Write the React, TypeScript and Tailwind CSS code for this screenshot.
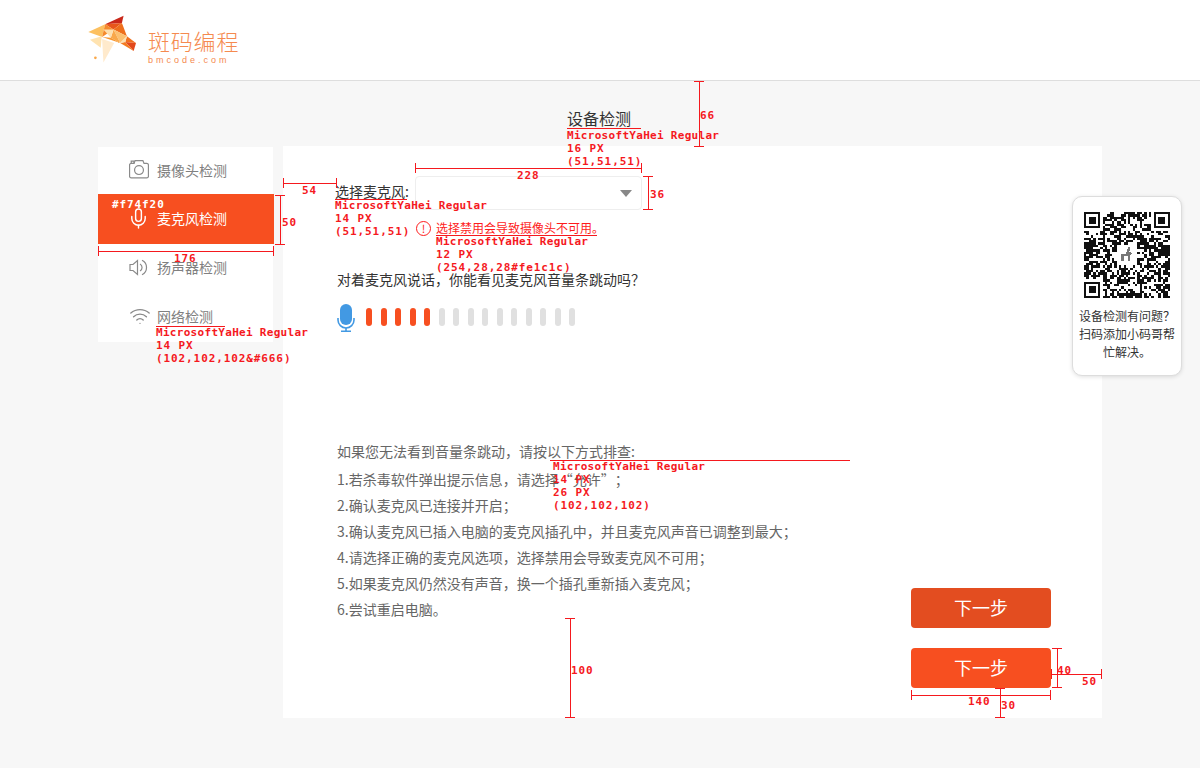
import { Mic, Wifi } from "lucide-react";

const font = { cn: "font-['Noto_Sans_CJK_SC','Noto_Sans',sans-serif] [text-spacing-trim:space-all]" };

const volume = [1, 1, 1, 1, 1, 0, 0, 0, 0, 0, 0, 0, 0, 0, 0];

const tips = [
  "1.若杀毒软件弹出提示信息，请选择“允许”；",
  "2.确认麦克风已连接并开启；",
  "3.确认麦克风已插入电脑的麦克风插孔中，并且麦克风声音已调整到最大；",
  "4.请选择正确的麦克风选项，选择禁用会导致麦克风不可用；",
  "5.如果麦克风仍然没有声音，换一个插孔重新插入麦克风；",
  "6.尝试重启电脑。",
];

function Logo() {
  return (
    <svg viewBox="54 45 143 145" className="h-[49px] w-[48px] shrink-0">
      <polygon points="105,72 160,47 155,68" fill="#c9281a" />
      <polygon points="105,72 155,68 130,88" fill="#e8561a" />
      <polygon points="155,68 170,108 130,88" fill="#ee6f1c" />
      <polygon points="170,108 197,128 165,125" fill="#f0701e" />
      <polygon points="130,88 170,108 150,128" fill="#fcc070" />
      <polygon points="130,88 150,128 122,112" fill="#f9a84a" />
      <polygon points="165,125 197,128 190,152" fill="#e2481b" />
      <polygon points="150,128 165,125 190,152" fill="#f47b20" />
      <polygon points="170,108 165,125 150,128" fill="#fde0b0" />
      <polygon points="55,95 105,72 96,110" fill="#fcc060" />
      <polygon points="105,72 130,88 96,110" fill="#f58a2c" />
      <polygon points="100,88 130,88 122,112" fill="#fde0b0" />
      <polygon points="96,110 122,112 150,128" fill="#f7962e" />
      <polygon points="60,118 95,108 92,142" fill="#ffe3b0" />
      <polygon points="96,116 132,128 100,186" fill="#ffeacc" />
      <circle cx="76" cy="172" r="4" fill="#f9a84a" />
    </svg>
  );
}

function CameraIcon() {
  return (
    <svg viewBox="1 1 18 17" className="h-[19px] w-[20px]" fill="none" stroke="#8a8a8a" strokeWidth="1.1">
      <path d="M1.5 5.5a1.5 1.500 0 0 1 1.500-1.500h2.500l1-2.500h7l1 2.500H17a1.500 1.500 0 0 1 1.500 1.500v10a1.500 1.500 0 0 1-1.500 1.500H3a1.500 1.500 0 0 1-1.500-1.500z" />
      <circle cx="10" cy="10" r="4" />
      <path d="M3 4V2h2.500V4" />
    </svg>
  );
}

function SpeakerIcon() {
  return (
    <svg viewBox="0 0 20 18" className="h-[19px] w-[20px]" fill="none" stroke="#8a8a8a" strokeWidth="1.2">
      <path d="M1 6h3l4.500-4v14L4 12H1z" />
      <path d="M11 5.500a4 4 0 0 1 0 7" />
      <path d="M13 1.800a8 8 0 0 1 0 14.400" />
    </svg>
  );
}

function MicSolid() {
  return (
    <svg viewBox="0 0 18 28" className="h-[28px] w-[18px] shrink-0" fill="none">
      <rect x="3" y="0" width="12" height="21" rx="6" fill="#4299e3" />
      <path d="M1 14v2a8 8 0 0 0 16 0v-2" stroke="#4299e3" strokeWidth="1.6" />
      <path d="M9 24v3M4 27.200h10" stroke="#4299e3" strokeWidth="1.6" />
    </svg>
  );
}

// pseudo random modules, good enough to read as a QR code at this size
function QrCode() {
  const n = 37;
  let seed = 20170;
  const cells: string[] = [];
  const inFinder = (x: number, y: number) =>
    (x < 8 && y < 8) || (x >= n - 8 && y < 8) || (x < 8 && y >= n - 8);
  for (let y = 0; y < n; y++) {
    for (let x = 0; x < n; x++) {
      seed = (seed * 1103515245 + 12345) & 0x7fffffff;
      if (!inFinder(x, y) && (seed >> 16) % 100 < 52) cells.push(`M${x} ${y}h1v1h-1z`);
    }
  }
  const finder = (x: number, y: number) => (
    <g key={`${x}-${y}`}>
      <rect x={x + 0.5} y={y + 0.5} width="6" height="6" fill="none" stroke="#111" />
      <rect x={x + 2} y={y + 2} width="3" height="3" fill="#111" />
    </g>
  );
  return (
    <svg viewBox="0 0 37 37" className="h-[86px] w-[86px]" shapeRendering="crispEdges">
      <path d={cells.join("")} fill="#111" />
      {finder(0, 0)}
      {finder(30, 0)}
      {finder(0, 30)}
      <rect x="14" y="14" width="9" height="9" fill="#fff" />
      <path d="M16 21v-3h2l1-3h1l-.5 2 1.500 1-1 .5V21h-1v-2h-2v2z" fill="#777" />
    </svg>
  );
}

function NavItem({ icon, label, className }: { icon: React.ReactNode; label: string; className: string }) {
  return (
    <div className={`flex items-center pb-[2px] pl-[31px] text-sm text-[#808080] ${className}`}>
      <span className="flex w-[28px] items-center">{icon}</span>
      {label}
    </div>
  );
}

function Note({ lines, className }: { lines: string[]; className: string }) {
  return (
    <div className={`absolute whitespace-pre font-['DejaVu_Sans_Mono',monospace] text-[11px] leading-[13px] font-bold text-[#f5191e] ${className}`}>
      {lines.map((l) => (
        <div key={l} className={l.startsWith("Micro") ? "tracking-[0.3px]" : "tracking-[0.9px]"}>
          {l}
        </div>
      ))}
    </div>
  );
}

const rules = [
  // 66
  "left-[699px] top-[81px] h-[65px] w-px",
  "left-[694px] top-[81px] h-px w-[10px]",
  "left-[694px] top-[146px] h-px w-[10px]",
  // title / label underlines
  "left-[567px] top-[128px] h-px w-[74px]",
  "left-[335px] top-[199px] h-px w-[72px]",
  "left-[436px] top-[235px] h-px w-[161px]",
  "left-[156px] top-[326px] h-px w-[69px]",
  "left-[550px] top-[460px] h-px w-[300px]",
  // 228
  "left-[415px] top-[168px] h-px w-[226px]",
  "left-[415px] top-[163px] h-[10px] w-px",
  "left-[641px] top-[163px] h-[10px] w-px",
  // 36
  "left-[648px] top-[176px] h-[33px] w-px",
  "left-[643px] top-[176px] h-px w-[10px]",
  "left-[643px] top-[209px] h-px w-[10px]",
  // 54
  "left-[283px] top-[183px] h-px w-[54px]",
  "left-[283px] top-[178px] h-[10px] w-px",
  "left-[336px] top-[178px] h-[10px] w-px",
  // 176
  "left-[98px] top-[251px] h-px w-[175px]",
  "left-[98px] top-[246px] h-[10px] w-px",
  "left-[273px] top-[246px] h-[10px] w-px",
  // 50 nav
  "left-[280px] top-[195px] h-[49px] w-px",
  "left-[275px] top-[195px] h-px w-[10px]",
  "left-[275px] top-[244px] h-px w-[10px]",
  // 100
  "left-[570px] top-[618px] h-[100px] w-px",
  "left-[565px] top-[618px] h-px w-[10px]",
  "left-[565px] top-[717px] h-px w-[10px]",
  // 40
  "left-[1057px] top-[648px] h-[40px] w-px",
  "left-[1052px] top-[648px] h-px w-[10px]",
  "left-[1052px] top-[687px] h-px w-[10px]",
  // 50 button
  "left-[1051px] top-[674px] h-px w-[50px]",
  "left-[1051px] top-[669px] h-[10px] w-px",
  "left-[1101px] top-[669px] h-[10px] w-px",
  // 140
  "left-[911px] top-[695px] h-px w-[139px]",
  "left-[911px] top-[690px] h-[10px] w-px",
  "left-[1050px] top-[690px] h-[10px] w-px",
  // 30
  "left-[1000px] top-[688px] h-[30px] w-px",
  "left-[995px] top-[688px] h-px w-[10px]",
  "left-[995px] top-[717px] h-px w-[10px]",
];

function Annotations() {
  return (
    <div className="pointer-events-none absolute inset-0">
      {rules.map((r) => (
        <div key={r} className={`absolute bg-[#f5191e] ${r}`} />
      ))}
      <Note className="left-[700px] top-[109px]" lines={["66"]} />
      <Note className="left-[567px] top-[129px]" lines={["MicrosoftYaHei Regular", "16 PX", "(51,51,51)"]} />
      <Note className="left-[517px] top-[169px]" lines={["228"]} />
      <Note className="left-[650px] top-[188px]" lines={["36"]} />
      <Note className="left-[302px] top-[184px]" lines={["54"]} />
      <Note className="left-[335px] top-[199px]" lines={["MicrosoftYaHei Regular", "14 PX", "(51,51,51)"]} />
      <Note className="left-[436px] top-[235px]" lines={["MicrosoftYaHei Regular", "12 PX", "(254,28,28#fe1c1c)"]} />
      <Note className="left-[112px] top-[198px] text-white" lines={["#f74f20"]} />
      <Note className="left-[282px] top-[216px]" lines={["50"]} />
      <Note className="left-[174px] top-[252px]" lines={["176"]} />
      <Note className="left-[156px] top-[326px]" lines={["MicrosoftYaHei Regular", "14 PX", "(102,102,102&#666)"]} />
      <Note className="left-[553px] top-[460px]" lines={["MicrosoftYaHei Regular", "14 PX", "26 PX", "(102,102,102)"]} />
      <Note className="left-[571px] top-[664px]" lines={["100"]} />
      <Note className="left-[1057px] top-[664px]" lines={["40"]} />
      <Note className="left-[1082px] top-[675px]" lines={["50"]} />
      <Note className="left-[968px] top-[695px]" lines={["140"]} />
      <Note className="left-[1001px] top-[699px]" lines={["30"]} />
    </div>
  );
}

export default function App() {
  return (
    <div className={`relative h-[768px] w-full overflow-hidden bg-[#f7f7f7] ${font.cn}`}>
      <header className="flex h-[81px] items-start gap-[12px] border-b border-[#dedede] bg-white pt-[15px] pl-[88px]">
        <Logo />
        <div className="pt-[12px] text-[#f58a4f]">
          <div className="text-[22px] leading-[26px] font-light tracking-[0.8px] whitespace-nowrap">斑码编程</div>
          <div className="mt-[2px] font-['Liberation_Sans',sans-serif] text-[9px] leading-[10px] tracking-[3px] whitespace-nowrap">bmcode.com</div>
        </div>
      </header>

      <div className="h-[65px] pt-[26px] pl-[567px] text-base leading-[22px] text-[#333]">设备检测</div>

      <div className="flex pl-[98px]">
        <nav className="mt-px h-[195px] w-[175px] bg-white">
          <NavItem className="h-[47px]" icon={<CameraIcon />} label="摄像头检测" />
          <NavItem
            className="h-[50px] w-[176px] bg-[#f74f20] text-white"
            icon={<Mic size={23} strokeWidth={1.5} className="-ml-[2px] text-white" />}
            label="麦克风检测"
          />
          <NavItem className="h-[48px]" icon={<SpeakerIcon />} label="扬声器检测" />
          <NavItem className="h-[50px]" icon={<Wifi size={22} strokeWidth={1.5} className="text-[#8a8a8a]" />} label="网络检测" />
        </nav>

        <main className="ml-[10px] flex h-[572px] w-[819px] bg-white pl-[54px]">
          <div className="w-[574px] pt-[30px]">
            <div className="-ml-[2px] flex items-center text-sm text-[#333]">
              <span className="w-[80px] pb-[4px]">选择麦克风:</span>
              <div className="flex h-[34px] w-[227px] items-center justify-end rounded border border-[#eeeeee] pr-[9px]">
                <div className="h-0 w-0 border-x-[6px] border-t-[7px] border-x-transparent border-t-[#888]" />
              </div>
            </div>

            <div className="mt-[9px] ml-[79px] flex h-[18px] items-center text-xs text-[#fe1c1c]">
              <span className="mr-[5px] flex h-[15px] w-[15px] items-center justify-center rounded-full border border-[#fe1c1c] text-[11px] leading-none">!</span>
              选择禁用会导致摄像头不可用。
            </div>

            <p className="mt-[32px] mb-[1px] text-sm leading-5 text-[#333]">对着麦克风说话，你能看见麦克风音量条跳动吗？</p>

            <div className="mt-[15px] flex items-center">
              <MicSolid />
              <div className="ml-[11px] flex gap-[8.5px] pb-[2px]">
                {volume.map((on, i) => (
                  <span key={i} className={on ? "h-[18px] w-[6px] rounded-full bg-[#f74f20]" : "h-[18px] w-[6px] rounded-full bg-[#e0e0e0]"} />
                ))}
              </div>
            </div>

            <div className="mt-[106px] text-sm leading-[26px] text-[#666]">
              <p className="mb-[2px]">如果您无法看到音量条跳动，请按以下方式排查:</p>
              {tips.map((t) => (
                <p key={t} className="whitespace-nowrap">{t}</p>
              ))}
            </div>
          </div>

          <div className="flex flex-col justify-end gap-[20px] pb-[30px]">
            <button type="button" className="h-10 w-[140px] rounded bg-[#e34d20] pb-[2px] text-lg text-white">下一步</button>
            <button type="button" className="h-10 w-[140px] rounded bg-[#f74f20] pb-[2px] text-lg text-white">下一步</button>
          </div>
        </main>
      </div>

      {/* floating help card */}
      <aside className="absolute top-[196px] left-[1072px] flex h-[180px] w-[110px] flex-col items-center rounded-[10px] border border-[#ddd] bg-white pt-[15px] shadow-[0_1px_4px_rgba(0,0,0,0.12)]">
        <QrCode />
        <p className="mt-[9px] px-[5px] text-center text-xs leading-[18px] text-[#333]">设备检测有问题？扫码添加小码哥帮忙解决。</p>
      </aside>

      <Annotations />
    </div>
  );
}
